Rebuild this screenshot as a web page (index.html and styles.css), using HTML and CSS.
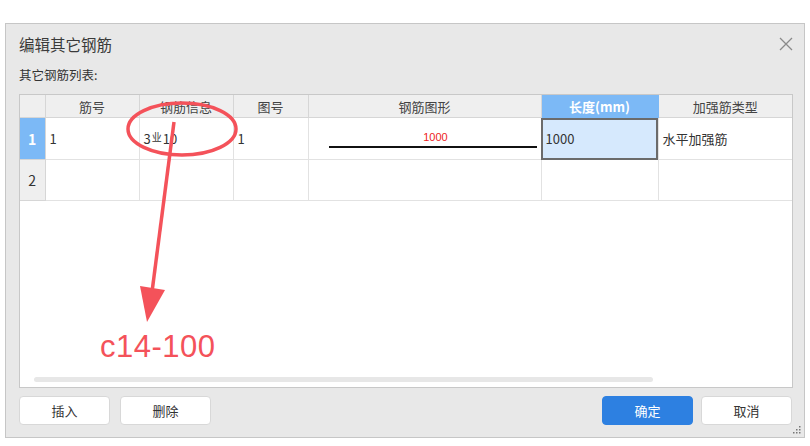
FILE: index.html
```html
<!DOCTYPE html>
<html lang="zh-CN">
<head>
  <meta charset="UTF-8">
  <title>编辑其它钢筋</title>
  <link rel="stylesheet" href="styles.css">
</head>
<body>
  <div class="dialog">
    <div class="title-bar">
      <span class="title">编辑其它钢筋</span>
      <span class="close">
        <svg width="14" height="14" viewBox="0 0 14 14"><path d="M1 1 L13 13 M13 1 L1 13" stroke="#8a8a8a" stroke-width="1.3" fill="none"/></svg>
      </span>
    </div>
    <div class="list-label">其它钢筋列表:</div>

    <div class="grid">
      <table class="rebar-table">
        <colgroup>
          <col style="width:25px"><col style="width:94px"><col style="width:94px"><col style="width:75px">
          <col style="width:233px"><col style="width:117px"><col style="width:134px">
        </colgroup>
        <thead>
          <tr>
            <th class="corner"></th>
            <th>筋号</th>
            <th>钢筋信息</th>
            <th>图号</th>
            <th>钢筋图形</th>
            <th class="active">长度(mm)</th>
            <th>加强筋类型</th>
          </tr>
        </thead>
        <tbody>
          <tr class="row-1">
            <td class="rownum active">1</td>
            <td>1</td>
            <td>3<span class="grade">业</span>10</td>
            <td>1</td>
            <td class="shape">
              <div class="shape-box">
                <span class="shape-len">1000</span>
                <span class="shape-line"></span>
              </div>
            </td>
            <td class="selected">1000</td>
            <td>水平加强筋</td>
          </tr>
          <tr class="row-2">
            <td class="rownum">2</td>
            <td></td><td></td><td></td><td></td><td></td><td></td>
          </tr>
        </tbody>
      </table>
      <div class="grid-fill"></div>
      <div class="scrollbar"></div>
    </div>

    <div class="footer">
      <button class="btn">插入</button>
      <button class="btn">删除</button>
      <span class="spacer"></span>
      <button class="btn primary">确定</button>
      <button class="btn">取消</button>
    </div>
    <span class="grip">
      <svg width="8" height="8" viewBox="0 0 8 8" fill="#777">
        <rect x="6" y="0" width="1.5" height="1.5"/><rect x="6" y="3" width="1.5" height="1.5"/><rect x="3" y="3" width="1.5" height="1.5"/>
        <rect x="6" y="6" width="1.5" height="1.5"/><rect x="3" y="6" width="1.5" height="1.5"/><rect x="0" y="6" width="1.5" height="1.5"/>
      </svg>
    </span>
  </div>

  <!-- red markup drawn over the screenshot -->
  <svg class="markup" width="810" height="446" viewBox="0 0 810 446">
    <ellipse cx="182" cy="129" rx="54" ry="26" fill="none" stroke="#f4525a" stroke-width="3.5"/>
    <path d="M174 122 L152 292" stroke="#f4525a" stroke-width="3.5" fill="none"/>
    <path d="M140 286 L165 290 L147 322 Z" fill="#f4525a"/>
  </svg>
  <div class="markup-text">c14-100</div>
</body>
</html>
```

FILE: styles.css
```css
body {
  margin: 0;
  background: #fff;
  font-family: "Microsoft YaHei", "Noto Sans CJK SC", "Liberation Sans", sans-serif;
  color: #333;
  width: 810px;
  height: 446px;
  position: relative;
  overflow: hidden;
}
.dialog {
  position: relative;
  box-sizing: border-box;
  margin: 23px 0 0 5px;
  width: 800px;
  height: 415px;
  border: 1px solid #c6c6c6;
  background: #e8e8e8;
  display: flex;
  flex-direction: column;
  padding: 0 12px 0 13px;
}
.title-bar {
  height: 40px;
  display: flex;
  align-items: center;
  justify-content: space-between;
}
.title {
  font-size: 15.5px;
  color: #3a3a3a;
}
.close {
  display: flex;
  margin-right: -1px;
}
.list-label {
  height: 22px;
  line-height: 22px;
  font-size: 12.5px;
  color: #333;
  margin-bottom: 8px;
}
.grid {
  box-sizing: border-box;
  height: 294px;
  width: 774px;
  border: 1px solid #c8c8c8;
  background: #fff;
  display: flex;
  flex-direction: column;
}
.rebar-table {
  border-collapse: collapse;
  table-layout: fixed;
  width: 772px;
  font-size: 13px;
}
.rebar-table th {
  height: 22px;
  padding: 0;
  background: #efefef;
  border: 1px solid #d6d6d6;
  border-top: none;
  font-weight: normal;
  color: #444;
}
.rebar-table th:first-child,
.rebar-table td:first-child {
  border-left: none;
}
.rebar-table th.active {
  background: #7cb9f6;
  color: #fff;
  font-weight: bold;
  border-color: #7cb9f6;
}
.rebar-table td {
  padding: 0 0 0 4px;
  border: 1px solid #e2e2e2;
  color: #333;
}
.rebar-table td:last-child,
.rebar-table th:last-child {
  border-right: none;
}
.row-1 td { height: 41px; }
.row-2 td { height: 40px; }
.rebar-table td.rownum {
  padding: 0;
  text-align: center;
  background: #efefef;
  border-color: #d6d6d6;
  font-size: 14px;
}
.rebar-table td.rownum.active {
  background: #7cb9f6;
  color: #fff;
  font-weight: bold;
}
.grade {
  font-size: 10px;
  margin: 0 1px;
  position: relative;
  top: -3px;
}
.shape-box {
  display: flex;
  flex-direction: column;
  align-items: flex-end;
  padding-right: 4px;
}
.shape-len {
  align-self: center;
  color: #ee2222;
  font-size: 11px;
  font-family: "Liberation Sans", sans-serif;
  margin: 0 0 1px 22px;
  line-height: 16px;
}
.shape-line {
  width: 208px;
  height: 2px;
  background: #111;
}
.rebar-table td.selected {
  background: #d6e9fd;
  outline: 2px solid #6b6b6b;
  outline-offset: -2px;
}
.grid-fill {
  flex: 1;
}
.scrollbar {
  width: 619px;
  height: 5px;
  border-radius: 3px;
  background: #e7e7e7;
  margin: 0 0 5px 14px;
}
.footer {
  display: flex;
  gap: 10px;
  margin-top: 8px;
}
.spacer {
  flex: 1;
}
.btn {
  box-sizing: border-box;
  width: 91px;
  height: 29px;
  border: 1px solid #d8d8d8;
  border-radius: 4px;
  background: #fff;
  font-family: inherit;
  font-size: 13px;
  color: #333;
}
.btn.primary {
  background: #2d80e1;
  border-color: #2d80e1;
  color: #fff;
  margin-right: -2px;
}
.grip {
  position: absolute;
  right: 3px;
  bottom: 3px;
  display: flex;
}
.markup {
  position: absolute;
  left: 0;
  top: 0;
}
.markup-text {
  position: absolute;
  left: 100px;
  top: 329px;
  font-family: "Liberation Sans", sans-serif;
  font-size: 31px;
  color: #f4525a;
  letter-spacing: 0.5px;
}
```
